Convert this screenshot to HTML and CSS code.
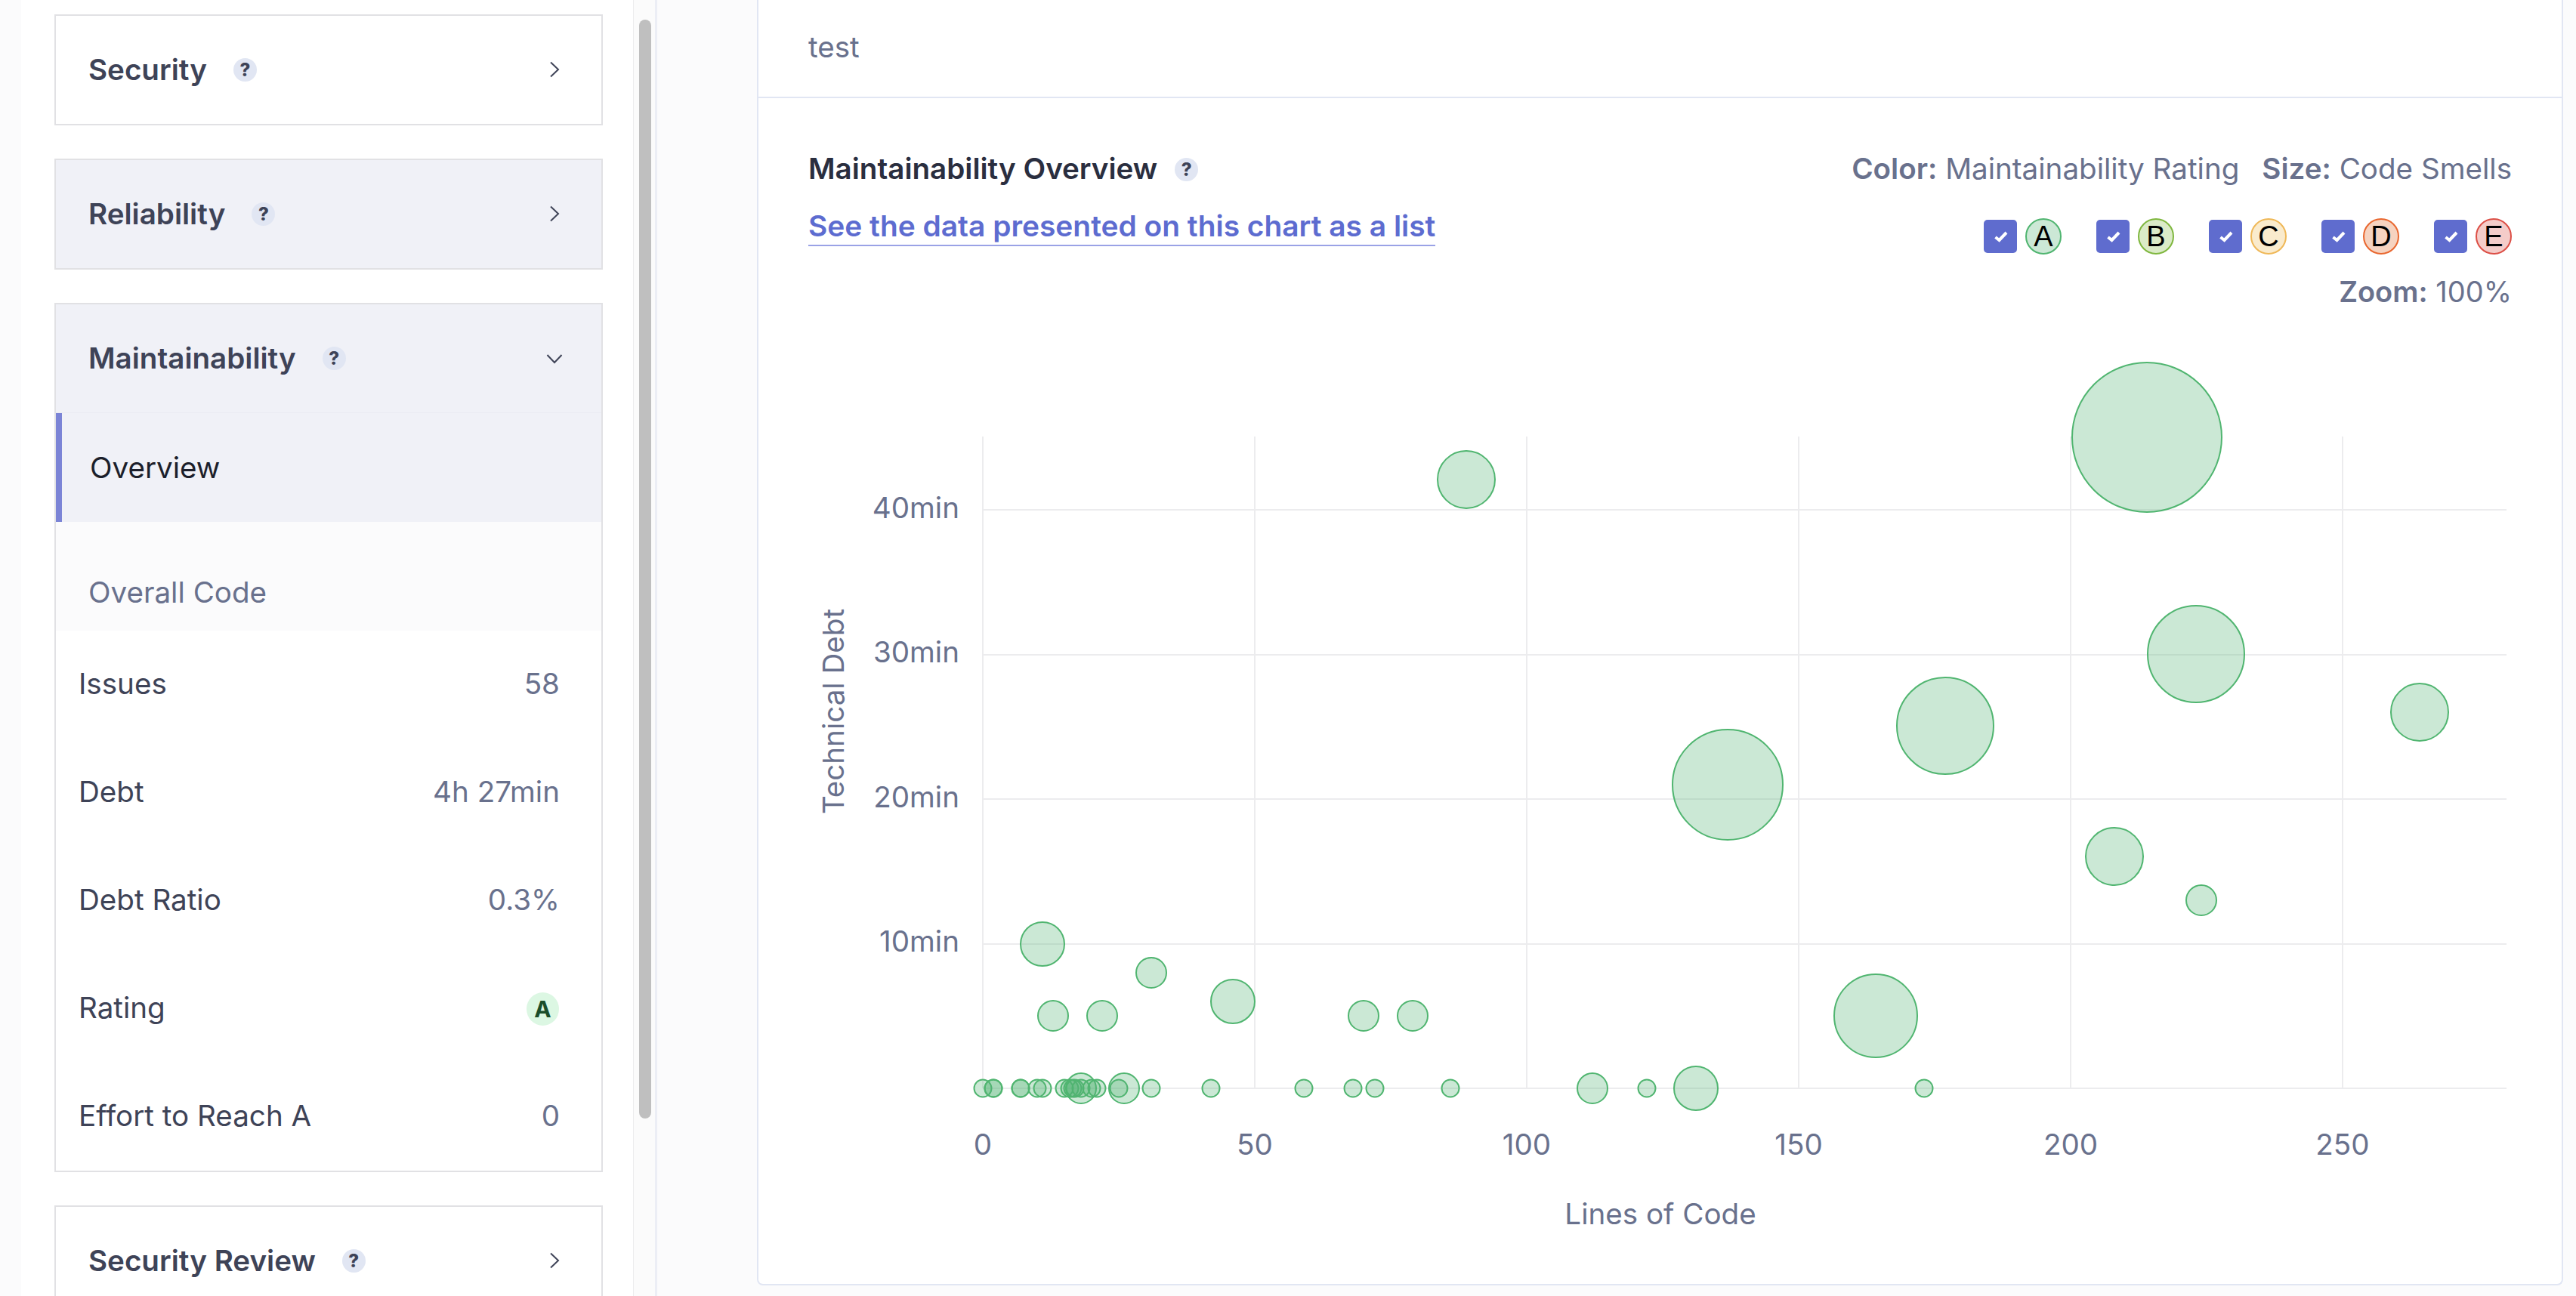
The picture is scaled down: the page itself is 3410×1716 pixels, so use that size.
FILE: index.html
```html
<!DOCTYPE html>
<html lang="en">
<head>
<meta charset="utf-8">
<title>Maintainability Overview</title>
<link rel="stylesheet" href="styles.css">
</head>
<body>
<div class="page">
  <aside class="sidebar">
    <section class="panel">
      <div class="panel-head"><span class="panel-title">Security</span><span class="help">?</span><svg class="chev" viewBox="0 0 14 22"><path d="M2 1.5 12 11 2 20.5"/></svg></div>
    </section>
    <section class="panel">
      <div class="panel-head tinted"><span class="panel-title">Reliability</span><span class="help">?</span><svg class="chev" viewBox="0 0 14 22"><path d="M2 1.5 12 11 2 20.5"/></svg></div>
    </section>
    <section class="panel">
      <div class="panel-head tinted open"><span class="panel-title">Maintainability</span><span class="help">?</span><svg class="chev-down" viewBox="0 0 22 14"><path d="M1.5 2 11 12 20.5 2"/></svg></div>
      <div class="nav-active">Overview</div>
      <div class="nav-group">Overall Code</div>
      <div class="row"><span>Issues</span><span class="val">58</span></div>
      <div class="row"><span>Debt</span><span class="val">4h 27min</span></div>
      <div class="row"><span>Debt Ratio</span><span class="val">0.3%</span></div>
      <div class="row"><span>Rating</span><span class="rating">A</span></div>
      <div class="row"><span>Effort to Reach A</span><span class="val">0</span></div>
    </section>
    <section class="panel">
      <div class="panel-head"><span class="panel-title">Security Review</span><span class="help">?</span><svg class="chev" viewBox="0 0 14 22"><path d="M2 1.5 12 11 2 20.5"/></svg></div>
    </section>
  </aside>
  <div class="scrolltrack"><div class="thumb"></div></div>
  <main class="card">
    <div class="card-top">test</div>
    <div class="chart-head">
      <div class="chart-left">
        <div class="chart-title"><span>Maintainability Overview</span><span class="help">?</span></div>
        <div class="chart-link-line"><a class="chart-link" href="#">See the data presented on this chart as a list</a></div>
      </div>
      <div class="chart-right">
        <div class="meta"><b>Color:</b> Maintainability Rating<b class="meta-size">Size:</b> Code Smells</div>
        <div class="legend">
          <div class="lg"><span class="check"><svg viewBox="0 0 44 44"><path d="M15.5 23 20.5 27 30 17"/></svg></span><span class="dot a">A</span></div>
          <div class="lg"><span class="check"><svg viewBox="0 0 44 44"><path d="M15.5 23 20.5 27 30 17"/></svg></span><span class="dot b">B</span></div>
          <div class="lg"><span class="check"><svg viewBox="0 0 44 44"><path d="M15.5 23 20.5 27 30 17"/></svg></span><span class="dot c">C</span></div>
          <div class="lg"><span class="check"><svg viewBox="0 0 44 44"><path d="M15.5 23 20.5 27 30 17"/></svg></span><span class="dot d">D</span></div>
          <div class="lg"><span class="check"><svg viewBox="0 0 44 44"><path d="M15.5 23 20.5 27 30 17"/></svg></span><span class="dot e">E</span></div>
        </div>
        <div class="zoom"><b>Zoom:</b> 100%</div>
      </div>
    </div>
    <svg class="chart" viewBox="1004 411 2387 1289">
      <g class="grid">
        <path d="M1301 578V1441M1661 578V1441M2021 578V1441M2381 578V1441M2741 578V1441M3101 578V1441"/>
        <path d="M1301 1441H3318M1301 1250H3318M1301 1058H3318M1301 867H3318M1301 675H3318"/>
      </g>
      <g class="axis-y">
        <text x="1270" y="1246">10min</text>
        <text x="1270" y="1055">20min</text>
        <text x="1270" y="863">30min</text>
        <text x="1270" y="672">40min</text>
      </g>
      <g class="axis-x">
        <text x="1301" y="1515">0</text>
        <text x="1661" y="1515">50</text>
        <text x="2021" y="1515">100</text>
        <text x="2381" y="1515">150</text>
        <text x="2741" y="1515">200</text>
        <text x="3101" y="1515">250</text>
        <text x="2198" y="1607">Lines of Code</text>
        <text transform="translate(1103 942) rotate(-90)">Technical Debt</text>
      </g>
      <g class="bubbles">
        <circle cx="1941" cy="635" r="38"/>
        <circle cx="2842" cy="579" r="99"/>
        <circle cx="2907" cy="866" r="64"/>
        <circle cx="2575" cy="961" r="64"/>
        <circle cx="3203" cy="943" r="38"/>
        <circle cx="2287" cy="1039" r="73"/>
        <circle cx="2799" cy="1134" r="38"/>
        <circle cx="2914" cy="1192" r="20"/>
        <circle cx="1380" cy="1250" r="29"/>
        <circle cx="1524" cy="1288" r="20"/>
        <circle cx="1394" cy="1345" r="20"/>
        <circle cx="1459" cy="1345" r="20"/>
        <circle cx="1632" cy="1326" r="29"/>
        <circle cx="1805" cy="1345" r="20"/>
        <circle cx="1870" cy="1345" r="20"/>
        <circle cx="2483" cy="1345" r="55"/>
        <circle cx="1301" cy="1441" r="11.5"/>
        <circle cx="1315" cy="1441" r="11.5"/>
        <circle cx="1315" cy="1441" r="11.5"/>
        <circle cx="1351" cy="1441" r="11.5"/>
        <circle cx="1351" cy="1441" r="11.5"/>
        <circle cx="1373" cy="1441" r="11.5"/>
        <circle cx="1380" cy="1441" r="11.5"/>
        <circle cx="1409" cy="1441" r="11.5"/>
        <circle cx="1416" cy="1441" r="11.5"/>
        <circle cx="1420" cy="1441" r="11.5"/>
        <circle cx="1423" cy="1441" r="11.5"/>
        <circle cx="1431" cy="1441" r="11.5"/>
        <circle cx="1431" cy="1441" r="20"/>
        <circle cx="1445" cy="1441" r="11.5"/>
        <circle cx="1452" cy="1441" r="11.5"/>
        <circle cx="1481" cy="1441" r="11.5"/>
        <circle cx="1488" cy="1441" r="20"/>
        <circle cx="1524" cy="1441" r="11.5"/>
        <circle cx="1603" cy="1441" r="11.5"/>
        <circle cx="1726" cy="1441" r="11.5"/>
        <circle cx="1791" cy="1441" r="11.5"/>
        <circle cx="1820" cy="1441" r="11.5"/>
        <circle cx="1920" cy="1441" r="11.5"/>
        <circle cx="2108" cy="1441" r="20"/>
        <circle cx="2180" cy="1441" r="11.5"/>
        <circle cx="2245" cy="1441" r="29"/>
        <circle cx="2547" cy="1441" r="11.5"/>
      </g>
    </svg>
  </main>
</div>
</body>
</html>
```
FILE: styles.css
```css
* { box-sizing: border-box; }
html, body { margin: 0; padding: 0; height: 100%; overflow: hidden; }
body {
  background: #fbfbfc;
  font-family: Inter, "Liberation Sans", sans-serif;
  font-size: 38.6px;
  color: #3e4357;
}
.page { display: flex; align-items: flex-start; height: 1716px; overflow: hidden; }

.sidebar {
  flex: none;
  width: 810px;
  height: 1716px;
  margin-left: 28px;
  padding: 19px 40px 0 44px;
  background: #fff;
  overflow: hidden;
  display: flex;
  flex-direction: column;
  gap: 44px;
}
.panel { flex: none; border: 2px solid #e1e1e4; background: #fff; }
.panel-head {
  height: 143px;
  display: flex;
  align-items: center;
  padding: 0 0 2px 43px;
  position: relative;
}
.panel-head.tinted { background: #f0f1f7; }
.panel-head.open { height: 144px; border-bottom: 1px solid #eaebf2; }
.panel-title { font-weight: 600; color: #3e4357; }
.help {
  flex: none;
  width: 31px;
  height: 31px;
  margin: 2px 0 0 35px;
  border-radius: 50%;
  background: #e1e6f3;
  color: #3e4357;
  font-size: 24px;
  font-weight: 800;
  line-height: 31px;
  text-align: center;
}
.chev, .chev-down { position: absolute; fill: none; stroke: #3e4357; stroke-width: 2; }
.chev { width: 14px; height: 22px; right: 55px; top: 60px; }
.chev-down { width: 22px; height: 14px; right: 51px; top: 65px; }

.nav-active {
  height: 144px;
  display: flex;
  align-items: center;
  padding-left: 37px;
  border-left: 8px solid #7b84d6;
  background: #f0f1f7;
  color: #1c1f2b;
}
.nav-group {
  height: 144px;
  display: flex;
  align-items: center;
  padding: 42px 0 0 43px;
  background: #fbfbfc;
  color: #69718d;
}
.row {
  height: 143px;
  display: flex;
  align-items: center;
  justify-content: space-between;
  padding: 0 55px 3px 30px;
}
.val { color: #69718d; }
.rating {
  width: 43px;
  height: 44px;
  margin-top: 3px;
  margin-right: 1px;
  border-radius: 50%;
  background: #dcf7e3;
  color: #1b4d2a;
  font-size: 30px;
  font-weight: 700;
  line-height: 44px;
  text-align: center;
}

.scrolltrack {
  flex: none;
  width: 32px;
  height: 1716px;
  padding: 26px 6px 0 7px;
  background: #fbfbfb;
  border-left: 1px solid #ededee;
  border-right: 3px solid #eceef5;
}
.thumb { width: 16px; height: 1455px; border-radius: 8px; background: #bfbfbf; }

.card {
  flex: none;
  width: 2391px;
  height: 1702px;
  margin-left: 132px;
  background: #fff;
  border: 2px solid #e1e6f3;
  border-top: 0;
  border-radius: 0 0 8px 8px;
}
.card-top {
  height: 130px;
  padding: 37px 0 0 66px;
  border-bottom: 2px solid #e1e6f3;
  color: #69718d;
  line-height: 50px;
}
.chart-head {
  height: 281px;
  padding: 68px 66px 0 66px;
  display: flex;
  justify-content: space-between;
}
.chart-title { display: flex; align-items: center; height: 50px; font-weight: 600; color: #2a2e3f; }
.chart-title .help { margin-left: 23px; }
.chart-link-line { margin-top: 28px; height: 50px; }
.chart-link {
  display: inline-block;
  height: 50px;
  line-height: 46px;
  font-weight: 600;
  font-size: 38.9px;
  color: #5d6cd0;
  text-decoration: none;
  border-bottom: 2px solid #9aa2e6;
}
.chart-right { display: flex; flex-direction: column; align-items: flex-end; color: #69718d; }
.meta, .zoom { height: 50px; line-height: 50px; white-space: nowrap; }
.meta b, .zoom b { font-weight: 600; }
.meta-size { margin-left: 30px; }
.legend { display: flex; gap: 46px; margin-top: 41px; }
.lg { display: flex; align-items: center; gap: 11px; height: 48px; }
.check { width: 44px; height: 44px; border-radius: 5px; background: #5f6cce; display: block; }
.check svg { display: block; width: 44px; height: 44px; fill: none; stroke: #fff; stroke-width: 4; }
.dot {
  width: 48px;
  height: 48px;
  border-radius: 50%;
  border: 2px solid;
  font-family: "Liberation Sans", sans-serif;
  font-size: 38px;
  line-height: 44px;
  text-align: center;
  color: #000;
}
.dot.a { background: #cce8d6; border-color: #50b570; }
.dot.b { background: #dbebc8; border-color: #7fb73f; }
.dot.c { background: #faebcd; border-color: #efb858; }
.dot.d { background: #f6d3c0; border-color: #e9672f; }
.dot.e { background: #f4ccc9; border-color: #dc4f46; }
.zoom { margin-top: 24px; font-size: 38px; }

.chart { display: block; width: 2387px; height: 1289px; }
.grid path { fill: none; stroke: #ececee; stroke-width: 2; }
.axis-y text, .axis-x text { font-family: Inter, "Liberation Sans", sans-serif; font-size: 38.6px; fill: #69718d; dominant-baseline: central; }
.axis-y text { text-anchor: end; }
.axis-x text { text-anchor: middle; }
.bubbles circle { fill: rgba(82, 179, 115, .3); stroke: #50b570; stroke-width: 2; }
```
